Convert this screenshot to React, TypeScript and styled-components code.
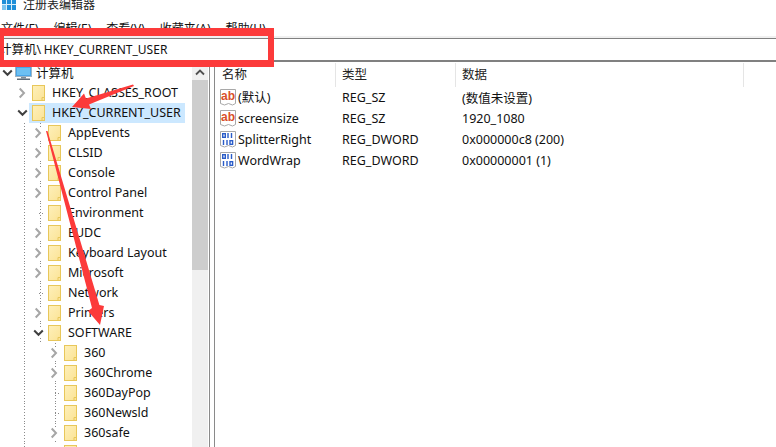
import { createGlobalStyle } from "styled-components";
import styled from "styled-components";

const GlobalStyle = createGlobalStyle`
  html, body {
    margin: 0;
    padding: 0;
    background: #fff;
  }
  body {
    width: 776px;
    height: 447px;
    overflow: hidden;
    font-family: "Noto Sans", "Noto Sans CJK SC", sans-serif;
    font-size: 12.5px;
    color: #111;
  }
`;

const Window = styled.div`
  position: relative;
  width: 776px;
  height: 447px;
  overflow: hidden;
  display: flex;
  flex-direction: column;
`;

const TitleBar = styled.div`
  height: 15px;
  display: flex;
  align-items: flex-end;
  gap: 7px;
  padding-left: 2px;
  overflow: hidden;
  flex-shrink: 0;
`;

const TitleText = styled.span`
  font-size: 12px;
  line-height: 12px;
  margin-bottom: 4px;
  color: #222;
`;

const MenuBar = styled.div`
  height: 21px;
  display: flex;
  align-items: flex-start;
  gap: 15px;
  padding: 6px 0 0 1px;
  box-sizing: border-box;
  flex-shrink: 0;
`;

const MenuItem = styled.span`
  font-size: 12px;
  line-height: 16px;
`;

const AddressBar = styled.div`
  height: 24px;
  box-sizing: border-box;
  border-top: 1px solid #808080;
  border-bottom: 2px solid #808080;
  box-shadow: 0 -2px 0 #f0f0f0;
  margin-top: 2px;
  display: flex;
  align-items: center;
  flex-shrink: 0;
`;

const AddressText = styled.span`
  font-size: 12px;
  line-height: 21px;
  margin-left: -1px;
`;

const AddressRoot = styled.span`
  font-size: 12.5px;
  padding-right: 2.5px;
`;

const Body = styled.div`
  flex: 1;
  display: flex;
  min-height: 0;
`;

const TreePane = styled.div`
  width: 192px;
  padding-top: 1px;
  overflow: hidden;
  flex-shrink: 0;
`;

const Row = styled.div<{ $level: number; $guides: number[] }>`
  height: 20px;
  display: flex;
  align-items: center;
  padding-left: ${(p) => Math.max(0, p.$level * 16 - 1)}px;
  white-space: nowrap;
  background-image: ${(p) =>
    p.$guides.length
      ? p.$guides
          .map(() => "repeating-linear-gradient(#8a8a8a 0 1px, transparent 1px 3px)")
          .join(",")
      : "none"};
  background-size: 1px 20px;
  background-repeat: no-repeat;
  background-position: ${(p) => p.$guides.map((x) => `${x}px 0`).join(",") || "0 0"};
`;

const Twisty = styled.span`
  width: 14px;
  height: 20px;
  display: flex;
  align-items: center;
  justify-content: center;
  flex-shrink: 0;

  svg {
    background: #fff;
  }
`;

const Stub = styled.span`
  width: 6px;
  height: 1px;
  margin-left: 8px;
  background-image: repeating-linear-gradient(90deg, #8a8a8a 0 1px, transparent 1px 3px);
`;

const Entry = styled.span<{ $selected?: boolean }>`
  display: inline-flex;
  align-items: center;
  height: 20px;
  padding: 0 4px 0 3px;
  gap: 7px;
  background: ${(p) => (p.$selected ? "#cce8ff" : "transparent")};
`;

const Label = styled.span`
  margin-bottom: 2px;
`;

const ComputerIcon = styled.svg`
  margin: 0 -3px 0 -2px;
  flex-shrink: 0;
`;

const ScrollBar = styled.div`
  width: 16px;
  background: #f0f0f0;
  display: flex;
  flex-direction: column;
  flex-shrink: 0;
`;

const ScrollButton = styled.div`
  height: 18px;
  display: flex;
  align-items: flex-end;
  justify-content: center;
  padding-bottom: 4px;
  box-sizing: border-box;
`;

const ScrollThumb = styled.div`
  height: 190px;
  background: #cdcdcd;
`;

const Splitter = styled.div`
  width: 4px;
  margin-left: 1px;
  border-left: 1px solid #8a8a8a;
  border-right: 1px solid #8a8a8a;
  flex-shrink: 0;
`;

const ListPane = styled.div`
  flex: 1;
  display: flex;
  flex-direction: column;
`;

const ListGrid = styled.div`
  display: grid;
  grid-template-columns: 121px 120px 288px 1fr;
`;

const HeaderCell = styled.div<{ $first?: boolean }>`
  height: 24px;
  box-sizing: border-box;
  margin-top: 1px;
  padding: 0 0 3px ${(p) => (p.$first ? 7 : 6)}px;
  border-right: 1px solid #e5e5e5;
  display: flex;
  align-items: center;
  color: #222;
`;

const Cell = styled.div`
  height: 21px;
  box-sizing: border-box;
  padding-left: 6px;
  display: flex;
  align-items: center;
  white-space: nowrap;
`;

const NameCell = styled(Cell)`
  padding-left: 5px;
  gap: 2px;
`;

const NameText = styled.span`
  line-height: 21px;
`;

const RedBox = styled.div`
  position: absolute;
  left: 0;
  top: 28px;
  width: 264px;
  height: 24px;
  border: solid #fc3a3a;
  border-width: 8px 6px 7px 4px;
  pointer-events: none;
`;

const ArrowLayer = styled.svg`
  position: absolute;
  left: 0;
  top: 0;
  pointer-events: none;
`;

function Chevron({ open }: { open?: boolean }) {
  return open ? (
    <svg width="11" height="8" viewBox="0 0 11 8">
      <path d="M1.2 1.5l4.3 4.3 4.3-4.3" fill="none" stroke="#404040" strokeWidth="2" />
    </svg>
  ) : (
    <svg width="8" height="12" viewBox="0 0 8 12">
      <path d="M1.7 1.5l4.3 4.5-4.3 4.5" fill="none" stroke="#a6a6a6" strokeWidth="2" />
    </svg>
  );
}

function Folder() {
  return (
    <svg width="13" height="16" viewBox="0 0 13 16" style={{ flexShrink: 0 }}>
      <defs>
        <linearGradient id="fld" x1="0" y1="0" x2="1" y2="1">
          <stop offset="0" stopColor="#fef0ba" />
          <stop offset="1" stopColor="#fbe396" />
        </linearGradient>
      </defs>
      <rect x="0.5" y="0.5" width="12" height="15" fill="url(#fld)" stroke="#e8c75a" />
      <path d="M10 15.5v-3h2.5" fill="none" stroke="#e8c75a" />
    </svg>
  );
}

function Computer() {
  return (
    <ComputerIcon width="17" height="14" viewBox="0 0 17 14">
      <rect x="0.5" y="0.5" width="16" height="10" fill="#4aa6e8" stroke="#9db4c4" />
      <rect x="2" y="2" width="13" height="7" fill="#6cc0f2" />
      <rect x="6" y="11" width="5" height="1.5" fill="#7d8c98" />
      <rect x="2" y="12.5" width="13" height="1.5" fill="#5e6c78" />
    </ComputerIcon>
  );
}

function ValueIcon({ kind }: { kind: "sz" | "dword" }) {
  return (
    <svg width="16" height="17" viewBox="0 0 16 17" style={{ flexShrink: 0 }}>
      <path
        d="M0.5 0.5h15v14l-3 1.5-4-1.5-4 1.5-4-1.5z"
        fill="#fff"
        stroke="#a8a8a8"
      />
      {kind === "sz" ? (
        <text
          x="8"
          y="11"
          textAnchor="middle"
          fontFamily="Liberation Sans, sans-serif"
          fontWeight="700"
          fontSize="12"
          fill="#d9502a"
        >
          ab
        </text>
      ) : (
        <g fill="none" stroke="#2a5cc8" strokeWidth="1.4">
          <rect x="2.7" y="2.7" width="2.6" height="3.6" />
          <path d="M8 2v5M11.5 2v5" />
          <path d="M3.5 9v5M7 9v5" />
          <rect x="10" y="9.7" width="2.6" height="3.6" />
        </g>
      )}
    </svg>
  );
}

type TreeItem = {
  label: string;
  level: number;
  state: "open" | "closed" | "leaf";
  guides: number[];
  selected?: boolean;
};

const G1 = [24];
const G2 = [24, 40];
const G3 = [24, 55];

const tree: TreeItem[] = [
  { label: "计算机", level: 0, state: "open", guides: [] },
  { label: "HKEY_CLASSES_ROOT", level: 1, state: "closed", guides: [] },
  { label: "HKEY_CURRENT_USER", level: 1, state: "open", guides: [], selected: true },
  { label: "AppEvents", level: 2, state: "closed", guides: G2 },
  { label: "CLSID", level: 2, state: "closed", guides: G2 },
  { label: "Console", level: 2, state: "closed", guides: G2 },
  { label: "Control Panel", level: 2, state: "closed", guides: G2 },
  { label: "Environment", level: 2, state: "leaf", guides: G2 },
  { label: "EUDC", level: 2, state: "closed", guides: G2 },
  { label: "Keyboard Layout", level: 2, state: "closed", guides: G2 },
  { label: "Microsoft", level: 2, state: "closed", guides: G2 },
  { label: "Network", level: 2, state: "leaf", guides: G2 },
  { label: "Printers", level: 2, state: "closed", guides: G2 },
  { label: "SOFTWARE", level: 2, state: "open", guides: G2 },
  { label: "360", level: 3, state: "closed", guides: G3 },
  { label: "360Chrome", level: 3, state: "closed", guides: G3 },
  { label: "360DayPop", level: 3, state: "leaf", guides: G3 },
  { label: "360Newsld", level: 3, state: "leaf", guides: G3 },
  { label: "360safe", level: 3, state: "closed", guides: G3 },
  { label: "", level: 3, state: "closed", guides: G1 },
];

const values = [
  { name: "(默认)", kind: "sz" as const, type: "REG_SZ", data: "(数值未设置)" },
  { name: "screensize", kind: "sz" as const, type: "REG_SZ", data: "1920_1080" },
  { name: "SplitterRight", kind: "dword" as const, type: "REG_DWORD", data: "0x000000c8 (200)" },
  { name: "WordWrap", kind: "dword" as const, type: "REG_DWORD", data: "0x00000001 (1)" },
];

export default function App() {
  return (
    <Window>
      <GlobalStyle />
      <TitleBar>
        <svg width="14" height="10" viewBox="0 0 14 10" style={{ flexShrink: 0, marginBottom: 5 }}>
          <rect width="14" height="10" fill="#1f8fd8" />
          <path d="M4.5 0v10M9.5 0v10M0 4.5h14" stroke="#d8eefa" />
          <rect x="0" y="5" width="4" height="5" fill="#7cc4ee" />
        </svg>
        <TitleText>注册表编辑器</TitleText>
      </TitleBar>
      <MenuBar>
        <MenuItem>文件(F)</MenuItem>
        <MenuItem>编辑(E)</MenuItem>
        <MenuItem>查看(V)</MenuItem>
        <MenuItem>收藏夹(A)</MenuItem>
        <MenuItem>帮助(H)</MenuItem>
      </MenuBar>
      <AddressBar>
        <AddressText>
          <AddressRoot>计算机\</AddressRoot>HKEY_CURRENT_USER
        </AddressText>
      </AddressBar>
      <Body>
        <TreePane>
          {tree.map((item, i) => (
            <Row key={i} $level={item.level} $guides={item.guides}>
              <Twisty>
                {item.state === "leaf" ? <Stub /> : <Chevron open={item.state === "open"} />}
              </Twisty>
              <Entry $selected={item.selected}>
                {item.level === 0 ? <Computer /> : <Folder />}
                <Label>{item.label}</Label>
              </Entry>
            </Row>
          ))}
        </TreePane>
        <ScrollBar>
          <ScrollButton>
            <svg width="10" height="7" viewBox="0 0 10 7">
              <path d="M1 5.5l4-4 4 4" fill="none" stroke="#505050" strokeWidth="1.8" />
            </svg>
          </ScrollButton>
          <ScrollThumb />
        </ScrollBar>
        <Splitter />
        <ListPane>
          <ListGrid>
            <HeaderCell $first>名称</HeaderCell>
            <HeaderCell>类型</HeaderCell>
            <HeaderCell>数据</HeaderCell>
            <div />
            {values.map((v) => [
              <NameCell key={v.name + "n"}>
                <ValueIcon kind={v.kind} />
                <NameText>{v.name}</NameText>
              </NameCell>,
              <Cell key={v.name + "t"}>{v.type}</Cell>,
              <Cell key={v.name + "d"}>{v.data}</Cell>,
              <div key={v.name + "e"} />,
            ])}
          </ListGrid>
        </ListPane>
      </Body>
      <RedBox />
      <ArrowLayer width="776" height="447" viewBox="0 0 776 447">
        <path d="M133 84.5L86 98.5 84 93.5 72 107 91 109 89 104.5 134 86z" fill="#fc3a3a" />
        <path d="M46 131L47.5 131 99.4 305 104 306 100 325 88 311 92 308z" fill="#fc3a3a" />
      </ArrowLayer>
    </Window>
  );
}
